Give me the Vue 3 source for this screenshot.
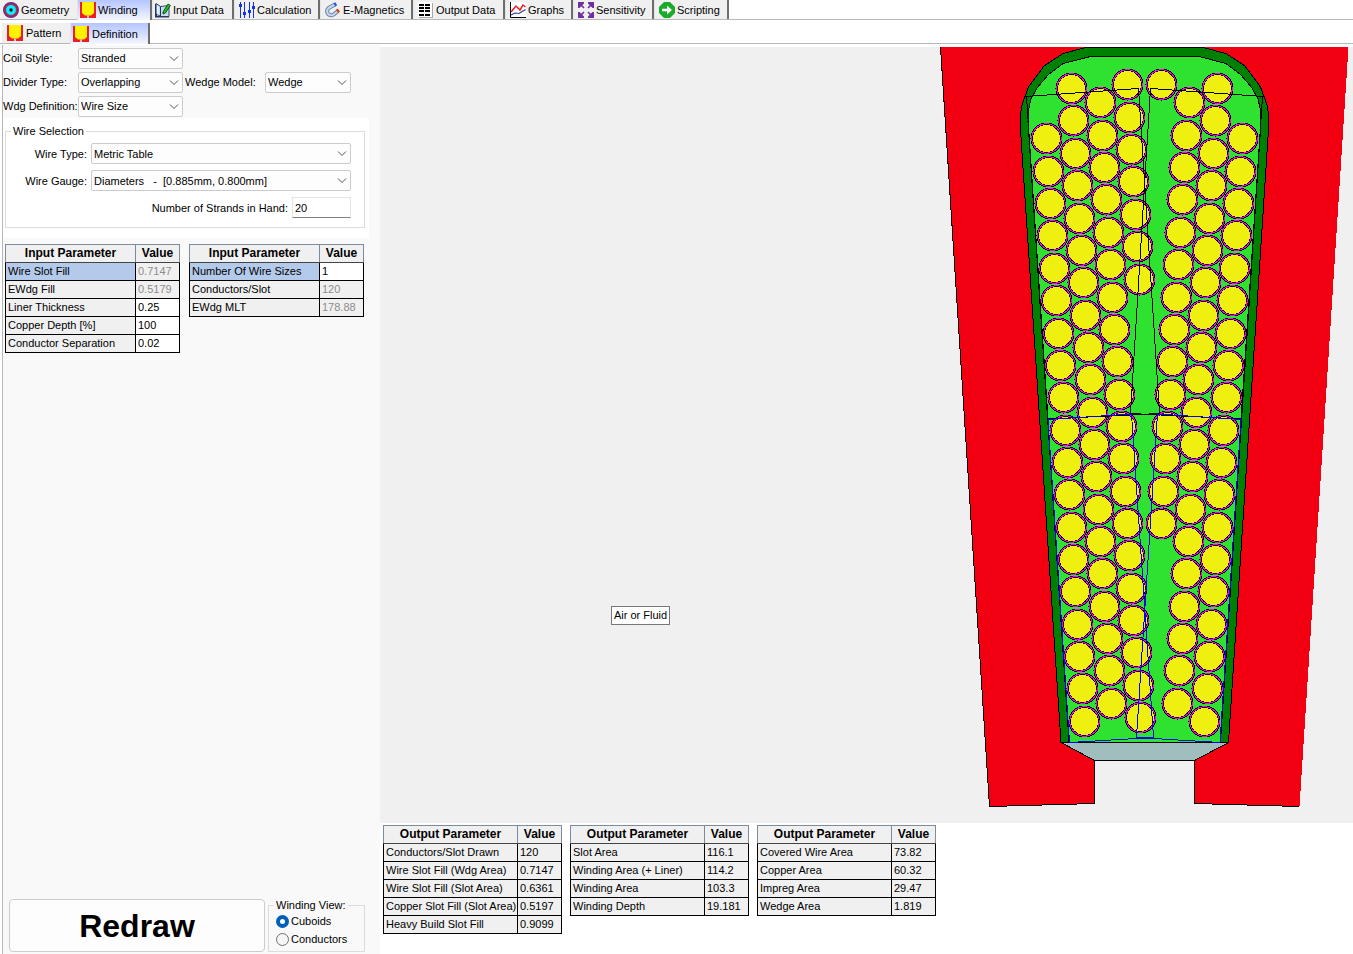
<script setup>
import { ref } from 'vue'

const tabs = [
  { name: 'Geometry', icon: 'geometry' },
  { name: 'Winding', icon: 'winding', active: true },
  { name: 'Input Data', icon: 'input' },
  { name: 'Calculation', icon: 'calc' },
  { name: 'E-Magnetics', icon: 'magnet' },
  { name: 'Output Data', icon: 'output' },
  { name: 'Graphs', icon: 'graph' },
  { name: 'Sensitivity', icon: 'sens' },
  { name: 'Scripting', icon: 'script' }
]
const subTabs = [{ name: 'Pattern' }, { name: 'Definition', active: true }]

const inputTables = ref([
  [
    { label: 'Wire Slot Fill', value: '0.7147', marked: true },
    { label: 'EWdg Fill', value: '0.5179' },
    { label: 'Liner Thickness', value: '0.25', edit: true },
    { label: 'Copper Depth [%]', value: '100', edit: true },
    { label: 'Conductor Separation', value: '0.02', edit: true }
  ],
  [
    { label: 'Number Of Wire Sizes', value: '1', edit: true, marked: true },
    { label: 'Conductors/Slot', value: '120' },
    { label: 'EWdg MLT', value: '178.88' }
  ]
])
const outputTables = [
  [
    ['Conductors/Slot Drawn', '120'],
    ['Wire Slot Fill (Wdg Area)', '0.7147'],
    ['Wire Slot Fill (Slot Area)', '0.6361'],
    ['Copper Slot Fill (Slot Area)', '0.5197'],
    ['Heavy Build Slot Fill', '0.9099']
  ],
  [
    ['Slot Area', '116.1'],
    ['Winding Area (+ Liner)', '114.2'],
    ['Winding Area', '103.3'],
    ['Winding Depth', '19.181']
  ],
  [
    ['Covered Wire Area', '73.82'],
    ['Copper Area', '60.32'],
    ['Impreg Area', '29.47'],
    ['Wedge Area', '1.819']
  ]
]

const strands = ref('20')
const view = ref('cuboids')

// Columns of conductors: first centre, number in the column, lean per row
const columns = [
  { x: 1046.2, y: 138.9, n: 19, dx: 2.11 },
  { x: 1071.2, y: 88.6, n: 20, dx: 2.11 },
  { x: 1100.2, y: 102.9, n: 20, dx: 2.11 },
  { x: 1127, y: 84.9, n: 7, dx: 2.11 },
  { x: 1242.9, y: 138.9, n: 19, dx: -2.11 },
  { x: 1217.9, y: 88.6, n: 20, dx: -2.11 },
  { x: 1189, y: 102.9, n: 14, dx: -2.11 },
  { x: 1161.8, y: 84.9, n: 1, dx: -2.11 }
]
const wires = columns.flatMap(c =>
  Array.from({ length: c.n }, (_, i) => ({
    x: Math.floor(c.x + i * c.dx) + 0.5,
    y: Math.floor(c.y + i * 32.35) + 0.5
  }))
)
</script>

<template>
  <div class="app">
    <nav class="tabs" aria-label="Modules">
      <button v-for="t in tabs" :key="t.name" type="button" class="tab" :class="{ active: t.active }">
        <svg class="icon" viewBox="0 0 16 16" aria-hidden="true">
          <g v-if="t.icon === 'geometry'">
            <circle cx="8" cy="8" r="7.3" fill="#f01030" stroke="#6a2c8c" stroke-width="1.4" />
            <circle cx="8" cy="8" r="5.4" fill="#10f0f8" stroke="#50306c" stroke-width=".6" />
            <circle cx="8" cy="8" r="1.7" fill="#10103c" />
          </g>
          <g v-else-if="t.icon === 'winding'">
            <path d="M0 0h16v16H0z" fill="#ee1c24" />
            <path d="M2 0h12v11l-3 2.500H5L2 11z" fill="#fff200" />
            <path d="M7 13.500h2V16H7z" fill="#c8c8c8" />
          </g>
          <g v-else-if="t.icon === 'input'">
            <path d="M0 2h2v12h12v1.500H0z" fill="#28305c" />
            <path d="M1 1.500l4.500 3L14 3.500v11H6L1 12z" fill="#c2dcf2" stroke="#28305c" stroke-width=".9" />
            <path d="M5.500 4.500v10" stroke="#28305c" />
            <path d="M3 4v8.500" stroke="#fff" />
            <path d="M8 10l5-8 2.400 1.400-5 7.600L8 12z" fill="#22c422" stroke="#143c14" stroke-width=".9" />
          </g>
          <g v-else-if="t.icon === 'calc'" fill="#1230ee">
            <path d="M1 0h1v16H1zM5 0h1v16H5zM10 0h1v16h-1zM14 0h1v16h-1z" />
            <path d="M0 2h3v3H0zM4 10h3v3H4zM9 8h3v3H9zM13 4h3v3h-3z" />
          </g>
          <g v-else-if="t.icon === 'magnet'" fill="none">
            <path d="M10 2.500L4.500 5.500C1 7.500 1.500 12 5 13c1.500.4 3 0 4-.8l4.500-3.700" stroke="#6882a2" stroke-width="4" />
            <path d="M10 2.500L4.500 5.500C1 7.500 1.500 12 5 13c1.500.4 3 0 4-.8l4.500-3.700" stroke="#c4d8ec" stroke-width="2" />
            <path d="M9.300 2.900l2-1.200" stroke="#2060d8" stroke-width="3.600" />
            <path d="M12 9.500l1.800-1.500" stroke="#d8461e" stroke-width="3.600" />
          </g>
          <g v-else-if="t.icon === 'output'">
            <path d="M1 1h14v15H1z" fill="#aaa" />
            <path d="M0 0h14v15H0z" fill="#fff" />
            <path d="M1 2h5v2H1zM7 2h5v2H7zM1 5h5v2H1zM7 5h5v2H7zM1 8h5v2H1zM7 8h5v2H7zM1 12h5v2H1zM7 12h5v2H7z" fill="#000" />
          </g>
          <g v-else-if="t.icon === 'graph'" fill="none">
            <path d="M0 0h16v16H0z" fill="#fff" />
            <path d="M.5 0v15.500H16" stroke="#000" />
            <path d="M1 10l5-6 4 4 3-5 2.500 2" stroke="#ee1c24" stroke-width="1.500" />
            <path d="M1 13l4-2 4 .5 6.500-4" stroke="#3038a0" stroke-width="1.200" />
          </g>
          <g v-else-if="t.icon === 'sens'">
            <path d="M1 1l5 5M15 1l-5 5M1 15l5-5M15 15l-5-5" stroke="#7030a0" stroke-width="1.600" />
            <path d="M0 0h6v1.500L1.500 6H0zM16 0h-6v1.500L14.500 6H16zM0 16h6v-1.500L1.500 10H0zM16 16h-6v-1.500l4.500-4.500H16z" fill="#7030a0" />
          </g>
          <g v-else>
            <path d="M5 0h6l5 5v6l-5 5H5l-5-5V5z" fill="#18ac28" />
            <path d="M3 6.800h5V3.500l5 4.500-5 4.500V9.200H3z" fill="#fff" />
          </g>
        </svg>
        <span>{{ t.name }}</span>
      </button>
    </nav>

    <nav class="subtabs" aria-label="Winding pages">
      <button v-for="t in subTabs" :key="t.name" type="button" class="tab" :class="{ active: t.active }">
        <svg class="icon" viewBox="0 0 16 16" aria-hidden="true">
          <path d="M0 0h16v16H0z" fill="#ee1c24" />
          <path d="M2 0h12v11l-3 2.500H5L2 11z" fill="#fff200" />
          <path d="M7 13.500h2V16H7z" fill="#c8c8c8" />
        </svg>
        <span>{{ t.name }}</span>
      </button>
    </nav>

    <main class="body">
      <section class="side">
        <div class="options">
          <label for="coil">Coil Style:</label>
          <span class="pick"><select id="coil"><option>Stranded</option></select><svg viewBox="0 0 10 6"><path d="M1 .5l4 4 4-4" /></svg></span>
          <span></span><span></span>
          <label for="divider">Divider Type:</label>
          <span class="pick"><select id="divider"><option>Overlapping</option></select><svg viewBox="0 0 10 6"><path d="M1 .5l4 4 4-4" /></svg></span>
          <label for="wedge" class="second">Wedge Model:</label>
          <span class="pick"><select id="wedge"><option>Wedge</option></select><svg viewBox="0 0 10 6"><path d="M1 .5l4 4 4-4" /></svg></span>
          <label for="wdg">Wdg Definition:</label>
          <span class="pick"><select id="wdg"><option>Wire Size</option></select><svg viewBox="0 0 10 6"><path d="M1 .5l4 4 4-4" /></svg></span>
        </div>

        <div class="wire-box">
          <fieldset class="wire">
            <legend>Wire Selection</legend>
            <div class="field">
              <label for="type">Wire Type:</label>
              <span class="pick wide"><select id="type"><option>Metric Table</option></select><svg viewBox="0 0 10 6"><path d="M1 .5l4 4 4-4" /></svg></span>
            </div>
            <div class="field">
              <label for="gauge">Wire Gauge:</label>
              <span class="pick wide"><select id="gauge"><option>Diameters &nbsp; - &nbsp;[0.885mm, 0.800mm]</option></select><svg viewBox="0 0 10 6"><path d="M1 .5l4 4 4-4" /></svg></span>
            </div>
            <div class="field">
              <label for="strands">Number of Strands in Hand:</label>
              <input id="strands" v-model="strands" class="strands" type="text">
            </div>
          </fieldset>
        </div>

        <div class="inputs">
          <table v-for="(rows, i) in inputTables" :key="i" class="grid in">
            <thead><tr><th scope="col">Input Parameter</th><th scope="col" class="val">Value</th></tr></thead>
            <tbody>
              <tr v-for="(r, j) in rows" :key="r.label">
                <td :class="{ marked: r.marked }"><label v-if="r.edit" :for="`p${i}-${j}`">{{ r.label }}</label><template v-else>{{ r.label }}</template></td>
                <td v-if="r.edit" class="edit"><input :id="`p${i}-${j}`" v-model="r.value" type="text"></td>
                <td v-else class="locked">{{ r.value }}</td>
              </tr>
            </tbody>
          </table>
        </div>

        <div class="actions">
          <button type="button" class="redraw">Redraw</button>
          <fieldset class="view">
            <legend>Winding View:</legend>
            <label><input v-model="view" type="radio" name="view" value="cuboids">Cuboids</label>
            <label><input v-model="view" type="radio" name="view" value="conductors">Conductors</label>
          </fieldset>
        </div>
      </section>

      <section class="main">
        <div class="canvas">
          <span class="tip">Air or Fluid</span>
          <svg class="slot" width="413" height="776" viewBox="940 47 413 776" shape-rendering="crispEdges" role="img" aria-label="Slot cross-section">
            <path d="M940 47L989.500 806.500L1094.500 803.500V760.500H1194.500V803.500L1299.500 806.500L1348.500 47z" fill="#f20012" />
            <path d="M1094.500 760.500H1194.500V824H1094.500z" fill="#f0f0f0" />
            <path class="ink" d="M940.500 47L989.500 806.500L1094.500 803.500V760.500M1194.500 760.500V803.500L1299.500 806.500" />
            <path class="ink" fill="#008000" d="M1086 47.500L1063 53.500L1044 66L1028.500 87L1021.500 106L1020 122L1061 742.500H1228.500L1269 122L1267.500 106L1260.500 87L1245 66L1226 53.500L1203 47.500z" />
            <path class="ink" fill="#30e230" d="M1090.500 56.500L1063 63.500L1048 75L1037 88L1031 99L1028.500 110L1028 122L1069 742.500H1220.500L1261 122L1260.500 110L1258 99L1252 88L1241 75L1226 63.500L1199 56.500z" />
            <path class="ink" fill="#a0bebe" d="M1061 742.500H1228.500L1194.500 760.500H1094.500z" />
            <g v-for="(w, i) in wires" :key="i">
              <circle :cx="w.x" :cy="w.y" r="16" fill="#000" />
              <circle :cx="w.x" :cy="w.y" r="15.200" fill="#f0f" />
              <circle :cx="w.x" :cy="w.y" r="14.200" fill="#000" />
              <circle :cx="w.x" :cy="w.y" r="13.500" fill="#f0f010" />
            </g>
            <path class="ink" d="M1026.500 96.500L1138.500 88.500L1159.500 413.500L1048 419z" />
            <path class="ink" d="M1262.500 96.500L1150.500 88.500L1130.500 413.500L1241 419z" />
            <path class="cold" d="M1048 419.500L1131.500 414L1153.500 737.500L1069.500 742.500z" />
            <path class="cold" d="M1241 419.500L1157.500 414L1136.500 737.500L1220 742.500z" />
          </svg>
        </div>
        <div class="outputs">
          <table v-for="(rows, i) in outputTables" :key="i" class="grid out">
            <thead><tr><th scope="col">Output Parameter</th><th scope="col" class="val">Value</th></tr></thead>
            <tbody>
              <tr v-for="r in rows" :key="r[0]"><td>{{ r[0] }}</td><td>{{ r[1] }}</td></tr>
            </tbody>
          </table>
        </div>
      </section>
    </main>
  </div>
</template>

<style>
html, body { background: #fff; }
</style>

<style scoped>
.app { display: flex; flex-direction: column; min-height: 100vh; font: 11px/14px "Liberation Sans", Arial, sans-serif; color: #000; }
.app *, .app *::before { box-sizing: border-box; }
button, input, select { font: inherit; color: inherit; margin: 0; }

.tabs, .subtabs { display: grid; border-bottom: 1px solid #b8b8b8; }
.tabs { grid-template-columns: 77px 75px 82px 86px 93px 92px 68px 81px 75px; height: 20px; }
.subtabs { grid-template-columns: 68px 80px; height: 24px; padding: 3px 0 0 2px; }
.tab { display: flex; align-items: center; gap: 2px; padding: 0 0 0 4px; border: 0; border-right: 2px solid #6e6e6e; border-left: 1px solid #e4e4e4; background: #f0f0f0; white-space: nowrap; overflow: hidden; }
.tab:nth-child(-n+3) { padding-left: 2px; }
.tab:first-child { padding-left: 3px; border-right: 0; border-left: 0; }
.subtabs .tab { gap: 3px; }
.subtabs .tab:first-child { padding-left: 5px; }
.tab.active { background: linear-gradient(#b4c4ff, #f4f6ff); margin-bottom: -1px; }
.icon { width: 16px; height: 16px; flex: none; }

.body { flex: 1; display: flex; padding-top: 1px; }
.side { display: flex; flex-direction: column; width: 378px; flex: none; margin-left: 2px; border-left: 1px solid #b8b8b8; background: #f9f9f9; }

.options { display: grid; grid-template-columns: 75px 105px 82px 86px; grid-auto-rows: 24px; align-items: center; padding: 1px 0 0; white-space: nowrap; }
.options .second { padding-left: 2px; }
.pick { position: relative; display: block; height: 21px; }
.pick select { appearance: none; display: block; width: 100%; height: 100%; padding: 0 16px 0 2px; border: 1px solid #ccc; border-radius: 2px; background: #fdfdfd; outline: 0; }
.pick svg { position: absolute; right: 4px; top: 8px; width: 10px; height: 6px; fill: none; stroke: #555; pointer-events: none; }

.wire-box { width: 366px; padding: 6px 4px 10px 2px; background: #fff; }
fieldset { margin: 0; min-width: 0; border: 1px solid #dcdcdc; }
legend { padding: 0 2px; }
.wire { padding: 2px 13px 6px 6px; }
.wire legend { margin-left: -1px; }
.field { display: flex; justify-content: flex-end; align-items: center; gap: 4px; height: 27px; white-space: nowrap; }
.pick.wide { width: 260px; }
.strands { width: 59px; height: 21px; padding: 0 2px; border: 1px solid #e4e4e4; border-bottom-color: #808080; background: #fff; outline: 0; }

.inputs { display: flex; align-items: flex-start; gap: 9px; padding: 6px 0 0 2px; }
.grid { border-collapse: collapse; table-layout: fixed; border: 1px solid #7b98b4; }
.grid.in { width: 175px; }
.grid.out { width: 179px; }
.grid tr { height: 18px; }
.grid th, .grid td { padding: 0 2px; border: 1px solid #000; background: #f0f0f0; text-align: left; white-space: nowrap; line-height: 17px; }
.grid th { text-align: center; font-size: 12px; border-color: #7b8ca0; border-bottom-color: #444; padding: 0; }
.grid .val { width: 44px; }
.grid td.marked { background: #b4caea; }
.grid td.locked { color: #8c8c8c; }
.grid td.edit { background: #fff; }
.edit input { display: block; width: 100%; height: 17px; padding: 0; border: 0; background: none; outline: 0; }

.actions { display: flex; align-items: flex-end; gap: 3px; margin-top: auto; padding: 0 0 2px 6px; }
.redraw { width: 256px; height: 53px; border: 1px solid #ccc; border-radius: 4px; background: #fdfdfd; font-size: 32px; font-weight: bold; }
.view { width: 97px; height: 54px; padding: 0 0 0 7px; }
.view legend { margin-left: -2px; }
.view label { display: flex; align-items: center; gap: 2px; height: 18px; }
.view input { appearance: none; width: 13px; height: 13px; border: 1px solid #707070; border-radius: 50%; background: #f6f6f6; }
.view input:checked { border: 4px solid #005fb8; background: #fff; }

.main { flex: 1; display: flex; flex-direction: column; min-width: 0; padding-top: 2px; }
.canvas { position: relative; flex: 1; display: flex; justify-content: flex-end; background: #f0f0f0; }
.slot { display: block; flex: none; }
.ink { stroke: #000; }
.ink:not([fill]) { fill: none; }
.cold { fill: none; stroke: #0000f8; }
.tip { position: absolute; left: 231px; top: 559px; padding: 1px 2px; border: 1px solid #777; background: #fff; line-height: 15px; }
.outputs { display: flex; align-items: flex-start; gap: 8px; height: 131px; padding: 2px 0 0 3px; }
</style>
